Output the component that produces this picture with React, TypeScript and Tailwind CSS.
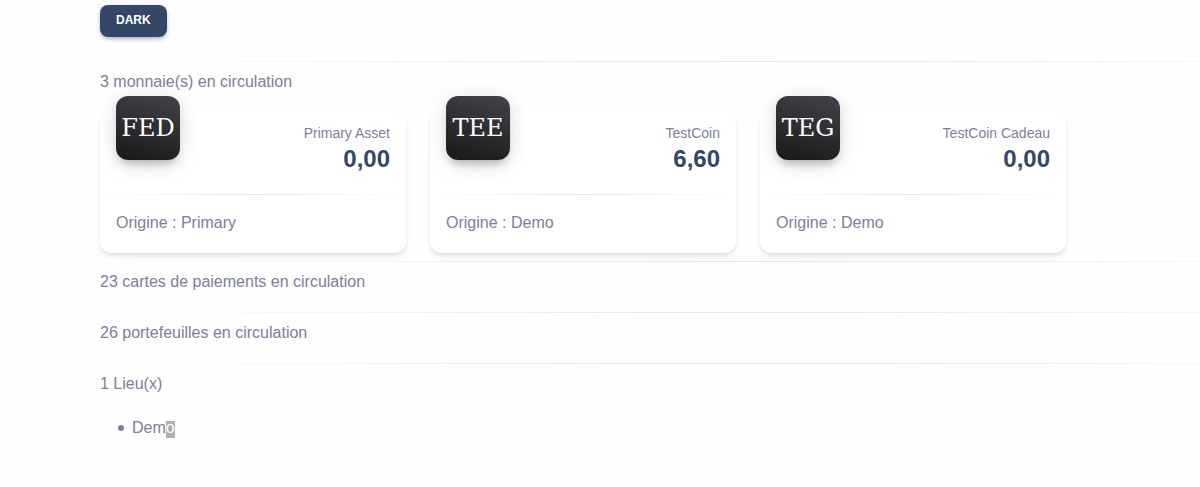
type Asset = { code: string; name: string; amount: string; origin: string };

const assets: Asset[] = [
  { code: "FED", name: "Primary Asset", amount: "0,00", origin: "Primary" },
  { code: "TEE", name: "TestCoin", amount: "6,60", origin: "Demo" },
  { code: "TEG", name: "TestCoin Cadeau", amount: "0,00", origin: "Demo" },
];

function Divider() {
  return (
    <hr className="h-px border-0 bg-linear-to-r from-transparent via-black/10 to-transparent" />
  );
}

function AssetCard({ asset }: { asset: Asset }) {
  return (
    <article className="rounded-xl bg-white shadow-[0_4px_6px_-1px_rgba(0,0,0,0.1),0_2px_4px_-1px_rgba(0,0,0,0.06)]">
      <header className="flex items-start justify-between px-4 pb-5">
        <div className="-mt-4 flex size-16 items-center justify-center rounded-xl bg-[linear-gradient(195deg,#42424a,#191919)] font-['DejaVu_Serif',serif] text-2xl text-white shadow-[0_4px_20px_0_rgba(0,0,0,0.14),0_7px_10px_-5px_rgba(64,64,64,0.4)]">
          {asset.code}
        </div>
        <div className="pt-2.5 text-right">
          <p className="text-sm leading-5.5">{asset.name}</p>
          <h4 className="text-2xl leading-7.5 font-bold text-[#344767]">{asset.amount}</h4>
        </div>
      </header>
      <Divider />
      <footer className="px-4 pt-[15px] pb-[17px]">
        <p>Origine : {asset.origin}</p>
      </footer>
    </article>
  );
}

export default function App() {
  return (
    <div className="min-h-screen overflow-x-hidden bg-[#fefefe] font-['Liberation_Sans',Arial,sans-serif] text-base leading-6.5 text-[#7b809a]">
      <main className="-mr-49 ml-25 pt-[5px]">
        <button
          type="button"
          className="mb-6 block h-8 rounded-lg bg-[#344767] px-4 pb-0.5 text-xs leading-4 font-bold text-white uppercase shadow-[0_3px_5px_-1px_rgba(0,0,0,0.09),0_2px_5px_-1px_rgba(52,71,103,0.4)]"
        >
          Dark
        </button>
        <Divider />
        <section className="pt-[7px] pb-2">
          <p>3 monnaie(s) en circulation</p>
          <div className="mt-[17px] grid grid-cols-4 gap-6">
            {assets.map((asset) => (
              <AssetCard key={asset.code} asset={asset} />
            ))}
          </div>
        </section>
        <Divider />
        <p className="pt-[7px] pb-[17px]">23 cartes de paiements en circulation</p>
        <Divider />
        <p className="pt-[7px] pb-[17px]">26 portefeuilles en circulation</p>
        <Divider />
        <section className="pt-[7px]">
          <p>1 Lieu(x)</p>
          <ul className="mt-4.5 pl-4.5">
            <li className="flex items-center gap-2 before:size-1.5 before:rounded-full before:bg-[#7b809a]">
              <span>
                Dem
                <span className="inline-block bg-[#b0b0b0] pb-1 leading-[13px] text-white">o</span>
              </span>
            </li>
          </ul>
        </section>
      </main>
    </div>
  );
}
